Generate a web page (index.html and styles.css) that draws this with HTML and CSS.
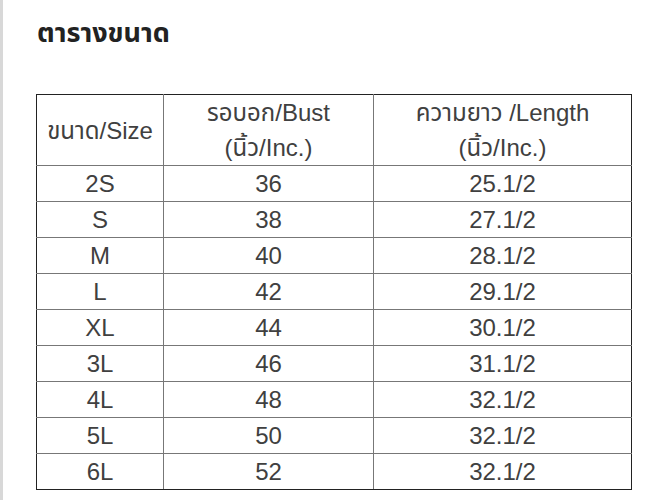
FILE: index.html
```html
<!DOCTYPE html>
<html lang="th">
<head>
<meta charset="utf-8">
<link rel="stylesheet" href="styles.css">
</head>
<body>
<div class="page">
  <h2 class="title">ตารางขนาด</h2>
  <table class="size-table">
    <colgroup>
      <col class="c1"><col class="c2"><col class="c3">
    </colgroup>
    <tr><td>ขนาด/Size</td><td>รอบอก/Bust<br>(นิ้ว/Inc.)</td><td>ความยาว /Length<br>(นิ้ว/Inc.)</td></tr>
    <tr><td>2S</td><td>36</td><td>25.1/2</td></tr>
    <tr><td>S</td><td>38</td><td>27.1/2</td></tr>
    <tr><td>M</td><td>40</td><td>28.1/2</td></tr>
    <tr><td>L</td><td>42</td><td>29.1/2</td></tr>
    <tr><td>XL</td><td>44</td><td>30.1/2</td></tr>
    <tr><td>3L</td><td>46</td><td>31.1/2</td></tr>
    <tr><td>4L</td><td>48</td><td>32.1/2</td></tr>
    <tr><td>5L</td><td>50</td><td>32.1/2</td></tr>
    <tr><td>6L</td><td>52</td><td>32.1/2</td></tr>
  </table>
</div>
</body>
</html>
```
FILE: styles.css
```css
html, body {
  margin: 0;
  padding: 0;
  background: #fff;
}
.page {
  border-left: 3px solid #d8d8d8;
  min-height: 500px;
  box-sizing: border-box;
  padding: 16px 0 0 33px;
  font-family: "Liberation Sans", "Noto Sans", "Noto Sans Thai", sans-serif;
}
.title {
  margin: 0 0 44px 1px;
  font-size: 27px;
  line-height: 34px;
  font-weight: bold;
  color: #222;
}
.size-table {
  border-collapse: collapse;
  color: #404040;
  font-size: 24px;
}
.size-table td {
  border: 1px solid #777;
  text-align: center;
  line-height: 35px;
  padding: 0;
}
.size-table tr:first-child td { border-top-color: #222; }
.size-table tr:last-child td { border-bottom-color: #222; }
.size-table td:first-child { border-left-color: #222; }
.size-table td:last-child { border-right-color: #222; }
.c1 { width: 127px; }
.c2 { width: 210px; }
.c3 { width: 258px; }
```
